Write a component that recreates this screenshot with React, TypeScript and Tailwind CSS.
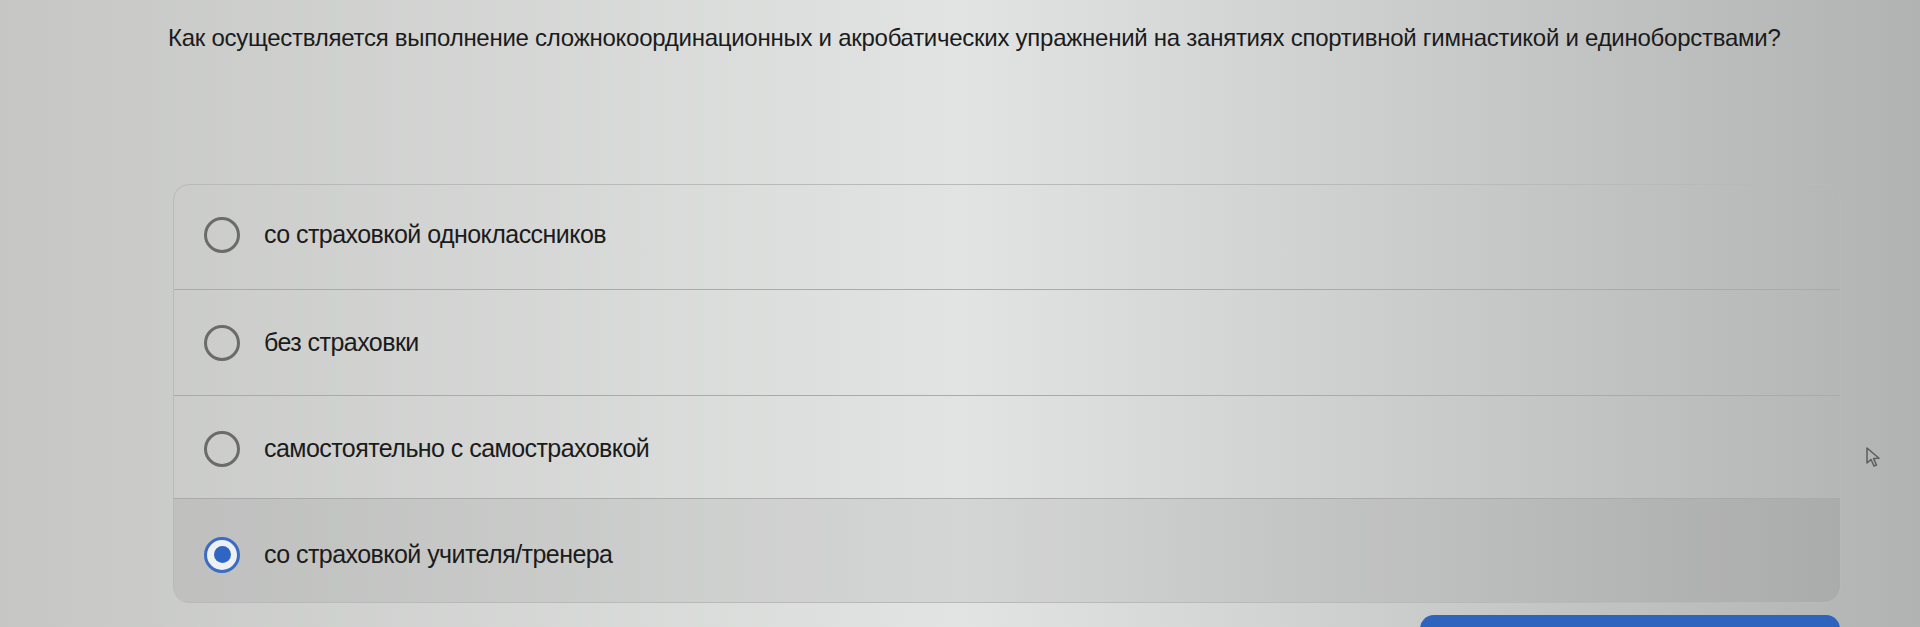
import { useState } from 'react';

const options = [
  'со страховкой одноклассников',
  'без страховки',
  'самостоятельно с самостраховкой',
  'со страховкой учителя/тренера',
];

const rowHeights = ['h-[104px] pb-[4px]', 'h-[106px]', 'h-[103px] pt-[3px]', 'h-[104px] pt-[8px]'];

function Radio({ checked }: { checked: boolean }) {
  if (checked) {
    return (
      <span className="flex h-[36px] w-[36px] shrink-0 items-center justify-center rounded-full border-[3px] border-[#3a6cc6] bg-[#eef0f2]">
        <span className="h-[17px] w-[17px] rounded-full bg-[#2f66c4]" />
      </span>
    );
  }
  return <span className="h-[36px] w-[36px] shrink-0 rounded-full border-[3px] border-[#6a6b6a]" />;
}

export default function App() {
  const [selected, setSelected] = useState(3);

  return (
    <div className="relative h-[627px] w-[1920px] overflow-hidden bg-linear-to-r from-[#c6c7c5] via-[#e2e4e3] to-[#b1b2b2] font-['Liberation_Sans',Arial,sans-serif] text-[#1b1b1b]">
      <div className="pl-[168px] pt-[23px] text-[24px] leading-[30px] tracking-[-0.26px]">
        Как осуществляется выполнение сложнокоординационных и акробатических упражнений на занятиях спортивной гимнастикой и единоборствами?
      </div>

      <div className="ml-[173px] mt-[131px] w-[1668px] rounded-[16px] border border-[#b8b9b8]">
        {options.map((text, i) => (
          <label
            key={text}
            onClick={() => setSelected(i)}
            className={`flex cursor-pointer items-center gap-[24px] pl-[30px] ${rowHeights[i]} ${
              i > 0 ? 'border-t border-[#a9aaa9]' : ''
            } ${i === options.length - 1 ? 'rounded-b-[16px]' : ''} ${
              selected === i ? 'bg-black/[0.06]' : ''
            }`}
          >
            <Radio checked={selected === i} />
            <span className="text-[25px] tracking-[-0.55px]">{text}</span>
          </label>
        ))}
      </div>

      {/* submit button peeking in at the bottom edge */}
      <div className="absolute left-[1420px] top-[615px] h-[30px] w-[420px] rounded-t-[14px] bg-[#2e64bd]" />

      {/* mouse pointer */}
      <svg className="absolute left-[1866px] top-[447px]" width="16" height="22" viewBox="0 0 16 22" fill="none">
        <path d="M1 1 L1 16 L5 12.5 L8 19 L10.5 18 L7.6 11.6 L13 11.2 Z" stroke="#5c5d5d" strokeWidth="1.5" strokeLinejoin="round" />
      </svg>
    </div>
  );
}
